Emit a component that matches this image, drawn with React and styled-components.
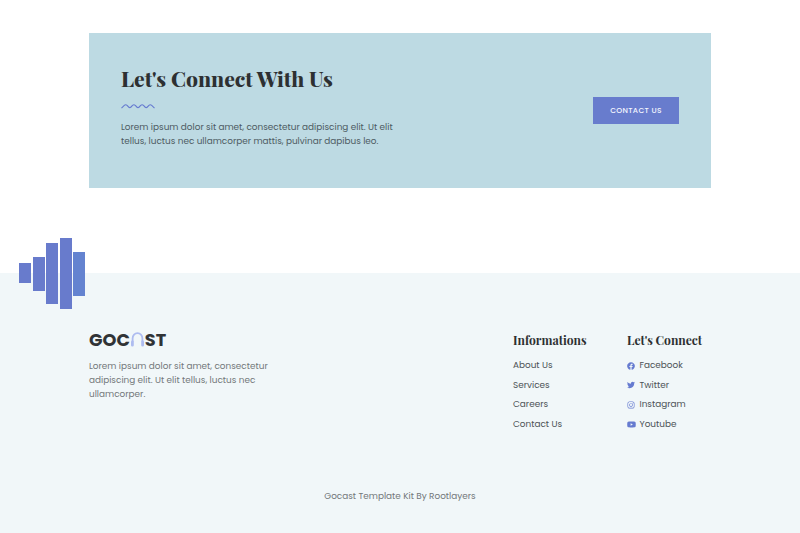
import React from "react";
import styled, { createGlobalStyle } from "styled-components";
import { FaFacebook, FaTwitter, FaInstagram, FaYoutube } from "react-icons/fa";

const sans = '"Poppins", "Inter", "Liberation Sans", sans-serif';
const serif = '"Playfair Display", "Liberation Serif", serif';

const GlobalStyle = createGlobalStyle`
  * { box-sizing: border-box; }
  body { margin: 0; background: #fff; font-family: ${sans}; }
  h1, h2, p, ul { margin: 0; padding: 0; }
`;

const Page = styled.div`
  width: 800px;
  height: 533px;
  overflow: hidden;
  padding-top: 33px;
`;

const Banner = styled.section`
  width: 622px;
  height: 155.4px;
  margin: 0 auto 84.6px;
  padding: 30px 32px 0;
  background: #bddae3;
  display: flex;
  justify-content: space-between;
`;

const BannerText = styled.div`
  display: flex;
  flex-direction: column;
  align-items: flex-start;
`;

const Title = styled.h1`
  font: 800 21.12px/30px ${serif};
  color: #2d3032;
  white-space: nowrap;
`;

const Wave = styled.svg`
  display: block;
  width: 34px;
  height: 6px;
  margin: 10px 0 11px;
`;

const Line = styled.span`
  display: block;
  width: max-content;
  white-space: nowrap;
`;

const Paragraph = styled.p`
  font-size: 8.89px;
  line-height: 14px;
  color: ${(p) => p.$color};
`;

const Button = styled.button`
  width: 86px;
  height: 27px;
  margin-top: 34px;
  padding: 0;
  border: 0;
  background: #687ccd;
  color: #f4f6ff;
  font: 500 7.5px/27px ${sans};
  letter-spacing: 0.34px;
  display: flex;
  justify-content: center;
`;

const Footer = styled.footer`
  position: relative;
  height: 260px;
  background: #f1f7f9;
  padding: 58px 89px 0;
`;

const Bars = styled.div`
  position: absolute;
  left: 19.3px;
  top: -35px;
  height: 71px;
  display: flex;
  align-items: center;
  gap: 1.5px;
`;

const Bar = styled.i`
  width: 12px;
  height: ${(p) => p.$height}px;
  margin-top: ${(p) => p.$shift || 0}px;
  background: ${(p) => p.$color || "#687bcc"};
`;

const Columns = styled.div`
  display: grid;
  grid-template-columns: 424px 114px auto;
  height: 157px;
`;

const Logo = styled.div`
  display: flex;
  align-items: center;
  height: 18px;
  margin-bottom: 10px;
  color: #303336;
  font: 700 17.7px/18px ${sans};
`;

const Headphones = styled.svg`
  width: 15px;
  height: 15px;
  flex: none;
`;

const Heading = styled.h2`
  font: 700 12.1px/18px ${serif};
  color: #2d3032;
  margin-bottom: 7px;
`;

const Links = styled.ul`
  list-style: none;
`;

const Item = styled.li`
  display: flex;
  align-items: center;
  height: 19.5px;
  font-size: 8.89px;
  color: #4c5256;
`;

const Icon = styled.span`
  display: flex;
  width: 12.5px;
  color: #667bd0;
  font-size: ${(p) => p.$size}px;
`;

const Copyright = styled.div`
  display: flex;
  justify-content: center;
  font-size: 8.89px;
  line-height: 16px;
  color: #73787a;
`;

const pages = ["About Us", "Services", "Careers", "Contact Us"];

const socials = [
  ["Facebook", FaFacebook, 8],
  ["Twitter", FaTwitter, 8],
  ["Instagram", FaInstagram, 8],
  ["Youtube", FaYoutube, 9],
];

export default function App() {
  return (
    <Page>
      <GlobalStyle />
      <Banner>
        <BannerText>
          <Title>Let's Connect With Us</Title>
          <Wave viewBox="0 0 34 6" fill="none" stroke="#667bd0" strokeWidth="1.1">
            <path d="M.5 5.2 L3.3 2.4 Q4.7 1.2 6.1 2.4 L7.6 4 Q8.8 5.1 10 4 L11.5 2.4 Q12.9 1.2 14.3 2.4 L15.8 4 Q17 5.1 18.2 4 L19.7 2.4 Q21.1 1.2 22.5 2.4 L24 4 Q25.2 5.1 26.4 4 L27.9 2.4 Q29.3 1.2 30.7 2.4 L33.5 5.2" />
          </Wave>
          <Paragraph $color="#4d5b62">
            <Line>Lorem ipsum dolor sit amet, consectetur adipiscing elit. Ut elit</Line>
            <Line>tellus, luctus nec ullamcorper mattis, pulvinar dapibus leo.</Line>
          </Paragraph>
        </BannerText>
        <Button><Line>CONTACT US</Line></Button>
      </Banner>
      <Footer>
        <Bars>
          <Bar $height={20} />
          <Bar $height={34} $shift={1} />
          <Bar $height={61} />
          <Bar $height={71} />
          <Bar $height={44} $shift={1} $color="#6483d0" />
        </Bars>
        <Columns>
          <div>
            <Logo>
              <Line>GOC</Line>
              <Headphones viewBox="0 0 15 15" fill="none" stroke="#aebcf0">
                <path d="M2.6 10V6.4a4.9 5.2 0 0 1 9.8 0V10" strokeWidth="1.8" />
                <path d="M2.4 10v3.2M12.6 10v3.2" strokeWidth="2.8" strokeLinecap="round" />
              </Headphones>
              <Line>ST</Line>
            </Logo>
            <Paragraph $color="#73787a">
              <Line>Lorem ipsum dolor sit amet, consectetur</Line>
              <Line>adipiscing elit. Ut elit tellus, luctus nec</Line>
              <Line>ullamcorper.</Line>
            </Paragraph>
          </div>
          <div>
            <Heading><Line>Informations</Line></Heading>
            <Links>
              {pages.map((label) => (
                <Item key={label}><Line>{label}</Line></Item>
              ))}
            </Links>
          </div>
          <div>
            <Heading><Line>Let's Connect</Line></Heading>
            <Links>
              {socials.map(([label, Glyph, size]) => (
                <Item key={label}>
                  <Icon $size={size}><Glyph /></Icon>
                  <Line>{label}</Line>
                </Item>
              ))}
            </Links>
          </div>
        </Columns>
        <Copyright><Line>Gocast Template Kit By Rootlayers</Line></Copyright>
      </Footer>
    </Page>
  );
}
